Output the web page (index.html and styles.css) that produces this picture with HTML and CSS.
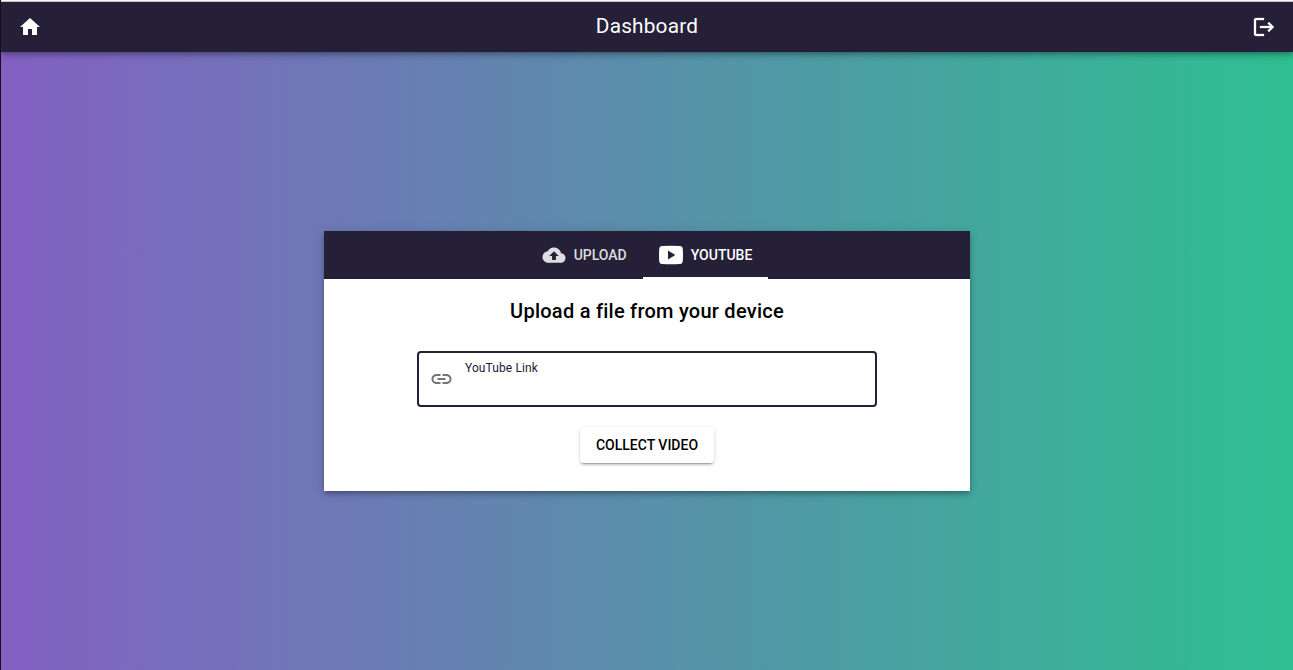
FILE: index.html
```
<!DOCTYPE html>
<html lang="en">
<head>
<meta charset="utf-8">
<title>Dashboard</title>
<link rel="stylesheet" href="styles.css">
</head>
<body>
<header class="appbar">
  <a class="icon-link" href="#" aria-label="Home"><svg class="icon" viewBox="0 0 24 24"><path d="M10 20v-6h4v6h5v-8h3L12 3 2 12h3v8z"/></svg></a>
  <h1 class="title">Dashboard</h1>
  <a class="icon-link" href="#" aria-label="Log out"><svg class="icon icon-bold" viewBox="0 0 24 24"><path d="M17 7l-1.41 1.41L18.17 11H8v2h10.17l-2.58 2.58L17 17l5-5zM4 5h8V3H4c-1.1 0-2 .9-2 2v14c0 1.1.9 2 2 2h8v-2H4V5z"/></svg></a>
</header>
<main class="content">
  <section class="card">
    <nav class="tabs">
      <a class="tab" href="#"><svg class="icon" viewBox="-.5 -.6 25 25"><path d="M19.35 10.04C18.67 6.59 15.64 4 12 4 9.11 4 6.6 5.64 5.35 8.04 2.34 8.36 0 10.91 0 14c0 3.31 2.69 6 6 6h13c2.76 0 5-2.24 5-5 0-2.64-2.05-4.78-4.65-4.96zM14 13v4h-4v-4H7l5-5 5 5h-3z"/></svg><span>Upload</span></a>
      <a class="tab tab-active" href="#"><svg class="icon" viewBox="0 0 24 24"><path fill-rule="evenodd" d="M3 3Q12 2.6 21 3 23.5 3 23.8 6 24.2 12 23.8 18 23.5 21 21 21 12 21.4 3 21 .5 21 .2 18-.2 12 .2 6 .5 3 3 3zM9 7.6v8.8l7.3-4.4z"/></svg><span>YouTube</span></a>
    </nav>
    <div class="panel">
      <h2 class="heading">Upload a file from your device</h2>
      <label class="field">
        <svg class="icon link-icon" viewBox="-.5 0 24 24"><path d="M3.9 12c0-1.71 1.39-3.1 3.1-3.1h4V7H7c-2.76 0-5 2.24-5 5s2.24 5 5 5h4v-1.9H7c-1.71 0-3.1-1.39-3.1-3.1zM8 13h8v-2H8v2zm9-6h-4v1.9h4c1.71 0 3.1 1.39 3.1 3.1s-1.39 3.1-3.1 3.1h-4V17h4c2.76 0 5-2.24 5-5s-2.24-5-5-5z"/></svg>
        <span class="field-body"><span class="field-label">YouTube Link</span><input class="field-input" type="text"></span>
      </label>
      <button class="button" type="button">Collect Video</button>
    </div>
  </section>
</main>
</body>
</html>
```
FILE: styles.css
```
* { box-sizing: border-box; }
body {
  margin: 0;
  height: 100vh;
  display: flex;
  flex-direction: column;
  border-left: 1px solid #180d20;
  background: linear-gradient(to right, #8360c3, #2ebf91);
  font-family: Roboto, sans-serif;
  overflow: hidden;
}
.icon { display: block; width: 24px; height: 24px; fill: currentColor; }
.icon-bold { stroke: currentColor; stroke-width: .3; }
.appbar {
  flex: none;
  height: 52px;
  padding: 1px 17px 0;
  display: flex;
  align-items: center;
  justify-content: space-between;
  border-top: 1px solid #f4f4f4;
  background: linear-gradient(#c4c4c8 1px, #252037 1px);
  color: #fff;
  box-shadow: 0 2px 4px -1px rgba(0,0,0,.2), 0 4px 5px rgba(0,0,0,.14), 0 1px 10px rgba(0,0,0,.12);
}
.icon-link { color: inherit; }
.title { margin: 0 0 2px; font-size: 20.8px; font-weight: 400; line-height: 32px; letter-spacing: .2px; }
.content { flex: 1; display: flex; align-items: center; justify-content: center; }
.card {
  width: 646px;
  height: 260px;
  background: #fff;
  box-shadow: 0 2px 4px -1px rgba(0,0,0,.2), 0 4px 5px rgba(0,0,0,.14), 0 1px 10px rgba(0,0,0,.12);
}
.tabs { height: 48px; display: flex; justify-content: center; background: #252037; }
.tab {
  display: flex;
  align-items: center;
  gap: 8px;
  padding: 2px 16px 0;
  border-bottom: 2px solid transparent;
  color: rgba(255,255,255,.85);
  font-size: 14px;
  font-weight: 500;
  text-transform: uppercase;
  text-decoration: none;
}
.tab-active { color: #fff; border-color: #fff; }
.panel { display: flex; flex-direction: column; align-items: center; padding-top: 16px; }
.heading { margin: 0; font-size: 20px; font-weight: 500; line-height: 32px; letter-spacing: .25px; }
.field {
  display: flex;
  align-items: center;
  width: 460px;
  height: 56px;
  margin-top: 24px;
  padding-left: 10px;
  border: 2px solid #252037;
  border-radius: 4px;
}
.link-icon { color: #757575; }
.field-body { flex: 1; align-self: stretch; display: flex; flex-direction: column; padding: 7px 12px 6px; }
.field-label { color: #252037; font-size: 12px; line-height: 16px; letter-spacing: .1px; }
.field-input { flex: 1; min-height: 0; padding: 0; border: 0; outline: 0; background: none; font: 16px Roboto, sans-serif; }
.button {
  height: 36px;
  margin-top: 20px;
  padding: 0 16px;
  border: 0;
  border-radius: 4px;
  background: #fff;
  color: #000;
  font: 500 14px Roboto, sans-serif;
  text-transform: uppercase;
  box-shadow: 0 3px 1px -2px rgba(0,0,0,.2), 0 2px 2px rgba(0,0,0,.14), 0 1px 5px rgba(0,0,0,.12);
}
```
